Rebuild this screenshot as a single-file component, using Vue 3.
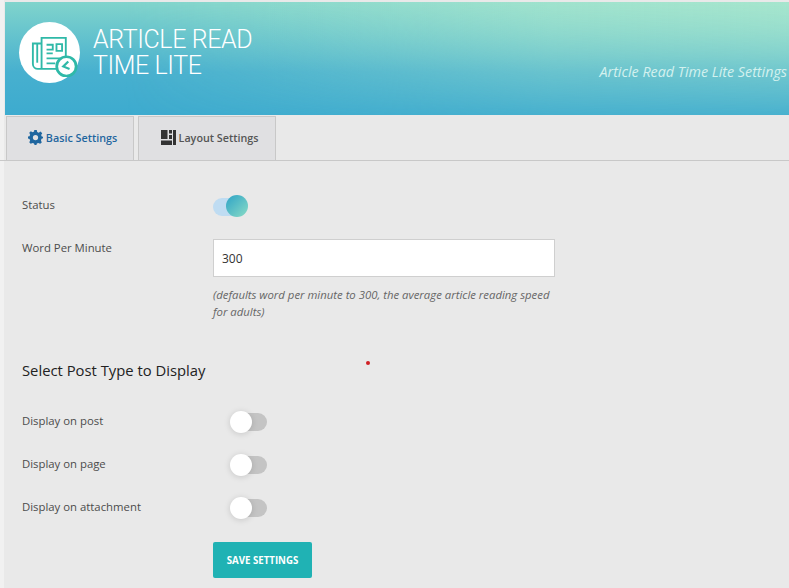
<script setup>
const toggles = ['Display on post', 'Display on page', 'Display on attachment']
</script>

<template>
  <div class="page">
    <header class="banner">
      <div class="logo">
        <svg width="48" height="41" viewBox="0 0 38 33" fill="none" stroke="#2fb9a8" stroke-width="1.500">
          <path d="M9 26V1.500H28.500V17" />
          <path d="M9 6H2V22.500C2 25 4 26.500 6 26.500H21" />
          <path d="M5.500 6V21.500" />
          <path d="M13 7H18V11H13M13 14H18" />
          <path d="M21 6.500H25.500V12H21Z" />
          <path d="M13 18H24M13 22H20" />
          <circle cx="29" cy="24.500" r="7.800" fill="#fff" stroke-width="2.200" />
          <path d="M30.500 20.500L26.500 24.500L31.500 26.500" stroke-width="1.800" />
        </svg>
      </div>
      <h1 class="title">ARTICLE READ<br />TIME LITE</h1>
      <p class="tagline">Article Read Time Lite Settings</p>
    </header>

    <nav class="tabs">
      <div class="tab active">
        <svg class="tab-icon" width="15" height="15" viewBox="0 0 24 24">
          <path fill="#1f669f" fill-rule="evenodd" d="M10 0H14L14.700 3.300 17.200 4.300 20 2.500 22.800 5.300 21 8.100 22 10.500 24 10.800V13.200L21.700 14 20.700 16.400 22 19.800 19.500 22 16.500 20.600 14.200 21.600 13.500 24H10.500L9.700 21.500 7.300 20.600 4.300 22 2 19.700 3.400 16.700 2.400 14.200 0 13.500V10.500L2.400 9.800 3.400 7.400 2 4.300 4.500 2 7.400 3.400 9.700 2.400ZM12 7.800A4.200 4.200 0 1 0 12 16.200 4.200 4.200 0 1 0 12 7.800Z" />
        </svg>
        <span>Basic Settings</span>
      </div>
      <div class="tab second">
        <svg class="tab-icon" width="15" height="15" viewBox="0 0 15 15">
          <path fill="#333" d="M0 0H6.500V9H0ZM0 10.500H11V15H0ZM8 0H11V3.500H8ZM8 5H11V9H8ZM12 0H15V15H12Z" />
        </svg>
        <span>Layout Settings</span>
      </div>
    </nav>

    <main class="content">
      <div class="row status-row">
        <span class="label">Status</span>
        <div class="switch on"><span class="knob"></span></div>
      </div>

      <div class="row wpm-row">
        <span class="label wpm-label">Word Per Minute</span>
        <div class="field">
          <input class="input" type="text" value="300" />
          <p class="hint">(defaults word per minute to 300, the average article reading speed for adults)</p>
        </div>
      </div>

      <h2 class="section">Select Post Type to Display</h2>

      <div v-for="item in toggles" :key="item" class="row toggle-row">
        <span class="label toggle-label">{{ item }}</span>
        <div class="switch off"><span class="knob"></span></div>
      </div>

      <button class="save" type="button">SAVE SETTINGS</button>
      <span class="dot"></span>
    </main>
  </div>
</template>

<style>
html, body { margin: 0; background: #e9e9e9; }
</style>

<style scoped>
.page {
  position: relative;
  width: 789px;
  height: 588px;
  overflow: hidden;
  box-sizing: border-box;
  padding: 2px 0 0 5px;
  background: linear-gradient(to right, #f1f1f1 4px, #e9e9e9 4px);
  font-family: "Open Sans", "Noto Sans", sans-serif;
  color: #444;
}
.banner {
  position: relative;
  height: 113px;
  display: flex;
  align-items: flex-start;
  background: linear-gradient(180deg, #80d4cc 0%, #47b0cf 62%, #3dabcf 100%);
  overflow: hidden;
}
.banner::before {
  content: "";
  position: absolute;
  inset: 0;
  background: linear-gradient(to right, rgba(168, 230, 205, 0) 15%, rgba(168, 230, 205, 0.8) 70%, rgba(168, 230, 205, 0.95) 100%);
  -webkit-mask-image: linear-gradient(to bottom, #000 0%, rgba(0, 0, 0, 0.5) 55%, rgba(0, 0, 0, 0.12) 100%);
  mask-image: linear-gradient(to bottom, #000 0%, rgba(0, 0, 0, 0.5) 55%, rgba(0, 0, 0, 0.12) 100%);
}
.logo {
  position: relative;
  width: 61px;
  height: 61px;
  margin: 20px 0 0 14px;
  border-radius: 50%;
  background: #fff;
  display: flex;
  align-items: center;
  justify-content: center;
}
.logo svg {
  flex: none;
  margin: 8px 0 0 9px;
}
.title {
  position: relative;
  margin: 25px 0 0 13px;
  font-family: Roboto, sans-serif;
  font-weight: 300;
  font-size: 25px;
  line-height: 26px;
  letter-spacing: -0.400px;
  color: #fff;
}
.tagline {
  position: absolute;
  right: 2px;
  top: 60px;
  margin: 0;
  font-style: italic;
  font-size: 14.300px;
  line-height: 20px;
  color: #d3f1ee;
}
.tabs {
  display: flex;
  gap: 4px;
  height: 46px;
  box-sizing: border-box;
  margin-left: -5px;
  padding: 1px 0 0 6px;
  border-bottom: 1px solid #c8c8c8;
}
.tab {
  width: 128px;
  box-sizing: border-box;
  border: 1px solid #c8c8c8;
  border-bottom: 0;
  background: #e0e0e2;
  display: flex;
  align-items: center;
  justify-content: center;
  gap: 3px;
  padding: 0 0 2px 5px;
  font-size: 10.750px;
  font-weight: 600;
  color: #555;
}
.tab.active { color: #1f669f; }
.tab.second { width: 138px; }
.tab-icon { flex: none; }
.content {
  position: relative;
  padding: 0 0 0 17px;
}
.row { display: flex; }
.label {
  width: 191px;
  flex: none;
  font-size: 11.350px;
  line-height: 16px;
  color: #4c4c4c;
}
.wpm-label { margin-top: 1px; }
.toggle-label { margin-top: 3px; }
.status-row { padding-top: 36px; height: 42px; }
.switch {
  position: relative;
  height: 18px;
  border-radius: 9px;
}
.switch.on {
  width: 34px;
  margin-top: 1px;
  background: #bfdcf2;
}
.switch.on .knob {
  position: absolute;
  right: -1px;
  top: -3px;
  width: 22px;
  height: 22px;
  border-radius: 50%;
  background: linear-gradient(135deg, #2ea3c6, #8adcc6);
}
.switch.off {
  width: 36px;
  margin-left: 18px;
  background: #c4c4c4;
}
.switch.off .knob {
  position: absolute;
  left: -1px;
  top: -2px;
  width: 22px;
  height: 22px;
  border-radius: 50%;
  background: #fff;
  box-shadow: 0 1px 6px rgba(0, 0, 0, 0.15);
}
.field { width: 342px; }
.input {
  display: block;
  width: 100%;
  height: 38px;
  box-sizing: border-box;
  border: 1px solid #cfcfcf;
  background: #fff;
  padding: 0 8px;
  font-family: inherit;
  font-size: 12px;
  color: #333;
  outline: none;
}
.hint {
  margin: 9px 0 0;
  font-style: italic;
  font-size: 11.350px;
  line-height: 17px;
  color: #666;
}
.section {
  margin: 40px 0 0;
  font-size: 14.800px;
  line-height: 20px;
  font-weight: 400;
  color: #222;
}
.toggle-row { height: 43px; align-items: flex-start; }
.section + .toggle-row { margin-top: 30px; }
.toggle-row .switch { margin-top: 3px; }
.save {
  display: block;
  margin: 3px 0 0 191px;
  width: 99px;
  height: 36px;
  border: 0;
  border-radius: 2px;
  background: #20b2b4;
  color: #fff;
  font-family: inherit;
  font-size: 9.700px;
  font-weight: 700;
}
.dot {
  position: absolute;
  left: 361px;
  top: 200px;
  width: 4px;
  height: 4px;
  border-radius: 50%;
  background: #d01f24;
}
</style>
